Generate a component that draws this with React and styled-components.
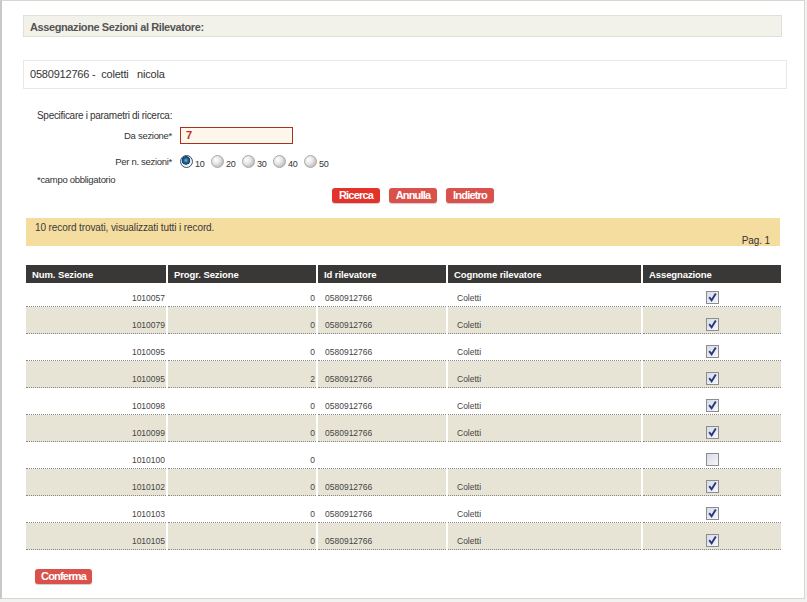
import styled, { createGlobalStyle } from "styled-components";

const rows = [
  { num: "1010057", progr: "0", id: "0580912766", cognome: "Coletti", checked: true },
  { num: "1010079", progr: "0", id: "0580912766", cognome: "Coletti", checked: true },
  { num: "1010095", progr: "0", id: "0580912766", cognome: "Coletti", checked: true },
  { num: "1010095", progr: "2", id: "0580912766", cognome: "Coletti", checked: true },
  { num: "1010098", progr: "0", id: "0580912766", cognome: "Coletti", checked: true },
  { num: "1010099", progr: "0", id: "0580912766", cognome: "Coletti", checked: true },
  { num: "1010100", progr: "0", id: "", cognome: "", checked: false },
  { num: "1010102", progr: "0", id: "0580912766", cognome: "Coletti", checked: true },
  { num: "1010103", progr: "0", id: "0580912766", cognome: "Coletti", checked: true },
  { num: "1010105", progr: "0", id: "0580912766", cognome: "Coletti", checked: true },
];

const options = ["10", "20", "30", "40", "50"];

export default function App() {
  return (
    <>
      <GlobalStyle />
      <Panel>
        <TitleBox>Assegnazione Sezioni al Rilevatore:</TitleBox>
        <UserBox>0580912766 -&nbsp; coletti &nbsp; nicola</UserBox>

        <Form>
          <Intro>Specificare i parametri di ricerca:</Intro>
          <FormRow>
            <FieldLabel>Da sezione*</FieldLabel>
            <TextInput>7</TextInput>
          </FormRow>
          <FormRow $top={11}>
            <FieldLabel>Per n. sezioni*</FieldLabel>
            <Radios>
              {options.map((o, i) => (
                <RadioItem key={o}>
                  <Radio $on={i === 0} />
                  <RadioText>{o}</RadioText>
                </RadioItem>
              ))}
            </Radios>
          </FormRow>
          <Note>*campo obbligatorio</Note>
          <Buttons>
            <Btn $bright>Ricerca</Btn>
            <Btn>Annulla</Btn>
            <Btn>Indietro</Btn>
          </Buttons>
        </Form>

        <Notice>
          <span>10 record trovati, visualizzati tutti i record.</span>
          <Page>Pag. 1</Page>
        </Notice>

        <Table>
          <colgroup>
            <col style={{ width: 141 }} />
            <col style={{ width: 150 }} />
            <col style={{ width: 130 }} />
            <col style={{ width: 195 }} />
            <col style={{ width: 139 }} />
          </colgroup>
          <thead>
            <tr>
              <Th>Num. Sezione</Th>
              <Th>Progr. Sezione</Th>
              <Th>Id rilevatore</Th>
              <Th>Cognome rilevatore</Th>
              <Th>Assegnazione</Th>
            </tr>
          </thead>
          <tbody>
            {rows.map((r, i) => (
              <Tr key={i} $alt={i % 2 === 1} $first={i === 0}>
                <Td $align="right">{r.num}</Td>
                <Td $align="right">{r.progr}</Td>
                <Td $pad={7}>{r.id}</Td>
                <Td $pad={9}>{r.cognome}</Td>
                <Td $align="center">
                  <Check $on={r.checked}>
                    {r.checked && (
                      <svg width="11" height="11" viewBox="0 0 11 11">
                        <path d="M2.2 5.2 L4.6 8.3 L8.8 1.6" fill="none" stroke="#27397c" strokeWidth="1.9" />
                      </svg>
                    )}
                  </Check>
                </Td>
              </Tr>
            ))}
          </tbody>
        </Table>

        <Footer>
          <Btn $wide>Conferma</Btn>
        </Footer>
      </Panel>
    </>
  );
}

const GlobalStyle = createGlobalStyle`
  body {
    margin: 0;
    background: #f2f2f0;
    font-family: "Liberation Sans", Arial, sans-serif;
    font-size: 10px;
    color: #333;
  }
`;

const Panel = styled.div`
  box-sizing: border-box;
  width: 805px;
  height: 599px;
  background: #fff;
  border: 1px solid #d6d6d2;
  border-left: 2px solid #c8c8c8;
  padding: 14px 22px 0 21px;
`;

const TitleBox = styled.div`
  height: 20px;
  line-height: 23px;
  background: #f2f1ea;
  border: 1px solid #e2e0d6;
  padding-left: 6px;
  font-weight: bold;
  font-size: 11px;
  letter-spacing: -0.4px;
  color: #555;
`;

const UserBox = styled.div`
  margin-top: 23px;
  margin-right: -5px;
  height: 27px;
  line-height: 27px;
  border: 1px solid #e8e8e6;
  padding-left: 6px;
  font-size: 11px;
  letter-spacing: -0.2px;
  color: #333;
`;

const Form = styled.div`
  padding-left: 14px;
  margin-top: 20px;
  letter-spacing: -0.3px;
`;

const Intro = styled.div`
  line-height: 14px;
`;

const FormRow = styled.div`
  display: flex;
  align-items: center;
  margin-top: ${(p) => p.$top ?? 4}px;
`;

const FieldLabel = styled.div`
  width: 135px;
  text-align: right;
  font-size: 9.5px;
  padding-right: 8px;
`;

const TextInput = styled.div`
  box-sizing: border-box;
  width: 113px;
  height: 17px;
  border: 1px solid #a8321e;
  background: #fdf6ec;
  color: #c0281a;
  font-weight: bold;
  font-size: 11px;
  line-height: 14px;
  padding-left: 5px;
`;

const Radios = styled.div`
  display: flex;
`;

const RadioItem = styled.label`
  display: flex;
  align-items: flex-end;
  gap: 2px;
  width: 31px;
`;

const Radio = styled.span`
  box-sizing: border-box;
  width: 13px;
  height: 13px;
  border-radius: 50%;
  border: 1px solid ${(p) => (p.$on ? "#2f4f6f" : "#a8a8a8")};
  background: ${(p) =>
    p.$on
      ? "radial-gradient(circle at 45% 40%, #6fb2e0 0, #1d5c8c 2.5px, #1d3f60 4px, #d8e6f0 4.5px, #f4f8fb 6px)"
      : "radial-gradient(circle at 35% 35%, #ffffff 0, #e6e6e6 4px, #c4c4c4 7px)"};
`;

const RadioText = styled.span`
  font-size: 9px;
  line-height: 9px;
  margin-bottom: -1px;
`;

const Note = styled.div`
  margin-top: 6px;
  font-size: 9.5px;
`;

const Buttons = styled.div`
  display: flex;
  gap: 9px;
  margin-top: 3px;
  padding-left: 295px;
`;

const Btn = styled.button`
  width: ${(p) => (p.$wide ? 57 : 48)}px;
  height: 15px;
  padding: 0;
  border: none;
  border-radius: 3px;
  background: ${(p) => (p.$bright ? "#e3322a" : "#d9514a")};
  color: #fff;
  font-family: "Liberation Sans", Arial, sans-serif;
  font-weight: bold;
  font-size: 11px;
  letter-spacing: -0.8px;
  line-height: 15px;
  box-shadow: 0 1px 1px rgba(0, 0, 0, 0.2);
`;

const Notice = styled.div`
  margin: 15px 2px 0 3px;
  height: 28px;
  background: #f5dc9f;
  padding: 4px 10px 0 9px;
  box-sizing: border-box;
  display: flex;
  flex-direction: column;
  line-height: 11px;
  letter-spacing: -0.1px;
  span {
    color: #3a3a3a;
  }
`;

const Page = styled.div`
  align-self: flex-end;
  margin-top: 2px;
  font-size: 10px;
`;

const Table = styled.table`
  margin: 19px 0 0 3px;
  width: 755px;
  border-collapse: collapse;
  table-layout: fixed;
`;

const Th = styled.th`
  height: 18px;
  background: #393836;
  color: #fff;
  text-align: left;
  padding: 0 6px;
  font-weight: bold;
  font-size: 9.5px;
  letter-spacing: -0.1px;
  border-left: 2px solid #fff;
  &:first-child {
    border-left: none;
  }
`;

const Tr = styled.tr`
  background: ${(p) => (p.$alt ? "#e7e4d6" : "#fff")};
  border-bottom: 1px dotted #888;
  td {
    height: ${(p) => (p.$first ? 20 : 23)}px;
  }
`;

const Td = styled.td`
  padding: 0 ${(p) => (p.$align === "right" ? 1 : 0)}px 3px ${(p) => p.$pad ?? 0}px;
  vertical-align: bottom;
  line-height: 10px;
  text-align: ${(p) => p.$align ?? "left"};
  font-size: 8.5px;
  color: #444;
  border-left: 2px solid #fff;
  &:first-child {
    border-left: none;
  }
`;

const Check = styled.span`
  box-sizing: border-box;
  display: inline-flex;
  align-items: center;
  justify-content: center;
  width: 13px;
  height: 13px;
  margin-bottom: -1px;
  vertical-align: bottom;
  border: 1px solid #8d8d8d;
  background: linear-gradient(135deg, #d6dbe6, #f6f7fa);
`;

const Footer = styled.div`
  padding: 19px 0 0 12px;
`;
